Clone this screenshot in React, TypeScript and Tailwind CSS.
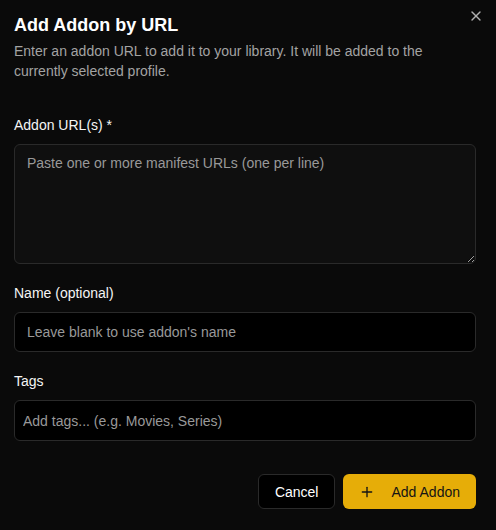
import { X, Plus } from 'lucide-react'

export default function App() {
  return (
    <div className="relative min-h-[530px] w-full bg-[#0a0a0a] pl-[14px] pr-[20px] pt-[11px] font-['Liberation_Sans',Arial,sans-serif] text-[#f5f5f5]">
      <button className="absolute right-[12px] top-[8px] text-[#b0b0b0]">
        <X className="h-4 w-4" strokeWidth={2} />
      </button>

      <h2 className="text-[18px] font-bold leading-7 text-white">Add Addon by URL</h2>
      <p className="mt-[2px] text-sm leading-5 text-[#a3a3a3]">
        Enter an addon URL to add it to your library. It will be added to the currently selected profile.
      </p>

      <div className="mt-[34px] flex flex-col">
        <label className="text-sm leading-5">Addon URL(s) *</label>
        <textarea
          className="mt-[9px] h-[120px] w-full resize-y rounded-md border border-[#2a2a2a] bg-[#0f0f0f] px-3 py-2 text-sm leading-5 text-white outline-none placeholder:text-[#999999]"
          placeholder="Paste one or more manifest URLs (one per line)"
        />

        <label className="mt-[19px] text-sm leading-5">Name (optional)</label>
        <input
          className="mt-[9px] h-10 w-full rounded-md border border-[#2a2a2a] bg-black px-3 text-sm text-white outline-none placeholder:text-[#999999]"
          placeholder="Leave blank to use addon's name"
        />

        <label className="mt-[19px] text-sm leading-5">Tags</label>
        <div className="mt-[9px] flex h-[41px] w-full items-center rounded-md border border-[#2a2a2a] bg-black px-2">
          <input
            className="w-full bg-transparent text-sm text-white outline-none placeholder:text-[#999999]"
            placeholder="Add tags... (e.g. Movies, Series)"
          />
        </div>
      </div>

      <div className="mt-[33px] flex justify-end gap-2">
        <button className="h-[35px] rounded-md border border-[#2a2a2a] bg-black px-4 text-sm text-white">
          Cancel
        </button>
        <button className="flex h-[35px] items-center gap-4 rounded-md bg-[#e6ad08] px-4 text-sm text-[#141414]">
          <Plus className="h-4 w-4" strokeWidth={2} />
          Add Addon
        </button>
      </div>
    </div>
  )
}
